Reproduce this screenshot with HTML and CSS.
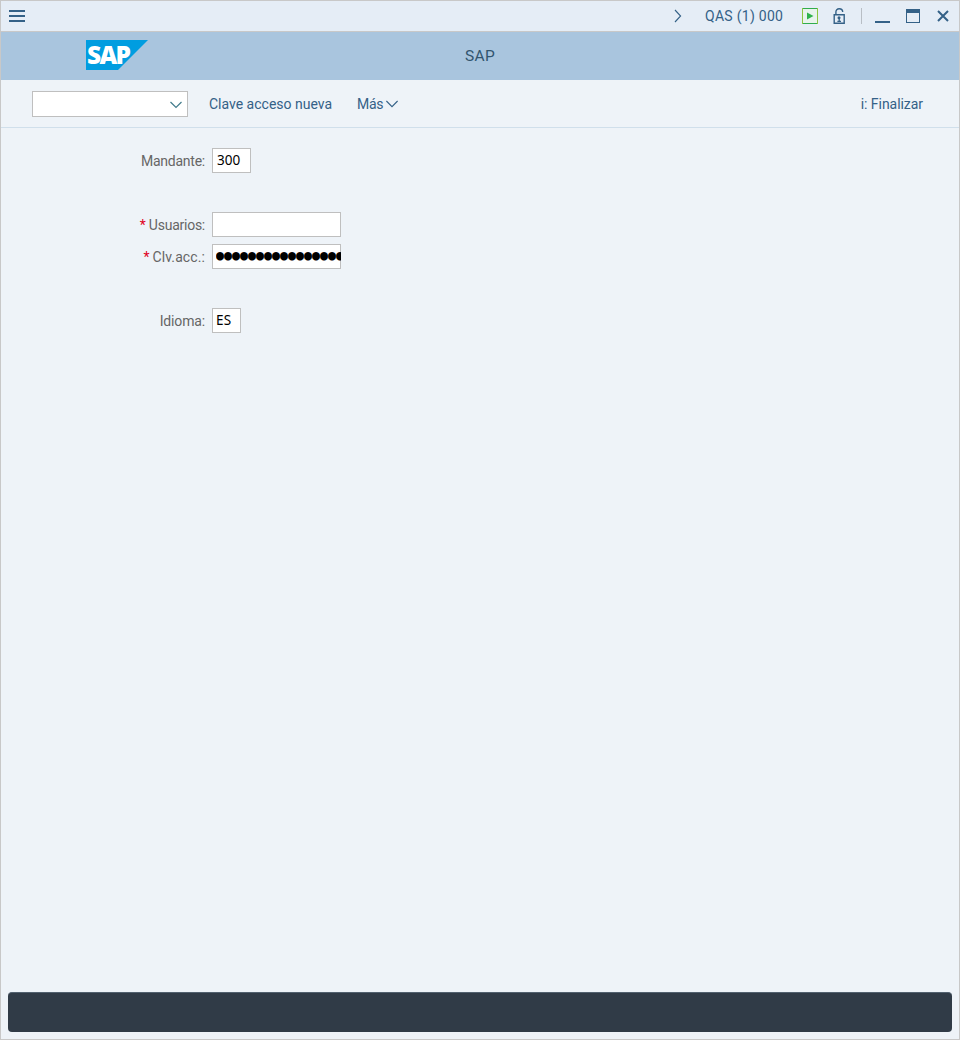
FILE: index.html
```html
<!DOCTYPE html>
<html lang="es">
<head>
<meta charset="utf-8">
<title>SAP</title>
<link rel="stylesheet" href="styles.css">
</head>
<body>
<div class="window">
  <header class="titlebar">
    <svg class="menu-icon" width="16" height="12" shape-rendering="crispEdges"><path d="M0 0h16v2H0zM0 5h16v2H0zM0 10h16v2H0z" fill="#346187"/></svg>
    <svg class="chevron-right" width="8" height="14" fill="none" stroke="#346187" stroke-width="1.1"><path d="M1 1l5.600 6L1 13"/></svg>
    <span class="system">QAS (1) 000</span>
    <svg class="play" width="16" height="16"><path d="M.5 .5h15v15H.5z" fill="#e8f3ec" stroke="#30ad4d"/><path d="M.5 0v16M15.500 0v16" stroke="#8cc63f"/><path d="M5 4.500v7l6.500-3.500z" fill="#2fb24c"/></svg>
    <svg class="lock" width="12" height="16" fill="none" stroke="#346187" stroke-width="1.400"><path d="M1.200 6.700h10v8.600h-10z"/><path d="M2.900 6.500V4C2.900 2 4.100.8 6.200.8S9.700 2 9.700 4"/><path d="M6.200 9v4.500M4.400 13.300h3.600" stroke-width="1.300"/><circle cx="6" cy="9.800" r="1.500" fill="#346187" stroke="none"/></svg>
    <i class="separator"></i>
    <svg class="minimize" width="15" height="2"><path d="M0 0h15v2H0z" fill="#346187"/></svg>
    <svg class="maximize" width="14" height="14" shape-rendering="crispEdges"><path d="M.5 .5h13v13H.5z" fill="none" stroke="#346187"/><path d="M0 0h14v4H0z" fill="#346187"/></svg>
    <svg class="close" width="12" height="12" stroke="#346187" stroke-width="2"><path d="M1 1l10 10M11 1L1 11"/></svg>
  </header>
  <div class="banner">
    <svg class="logo" width="62" height="30"><path d="M0 0h62L32 30H0z" fill="#009de0"/><text x="1" y="23.500" class="logo-text">SAP</text></svg>
    <h1 class="title">SAP</h1>
  </div>
  <nav class="toolbar">
    <div class="command"><svg width="12" height="8" fill="none" stroke="#427b8c" stroke-width="1.200"><path d="M.5 1L6 6.500 11.500 1"/></svg></div>
    <span class="new-password">Clave acceso nueva</span>
    <span class="more">Más</span>
    <svg class="more-arrow" width="12" height="8" fill="none" stroke="#346187" stroke-width="1.100"><path d="M.4 1L6 6.600 11.600 1"/></svg>
    <span class="exit">i: Finalizar</span>
  </nav>
  <main class="form">
    <div class="row"><label class="label client">Mandante:</label><div class="field field-client">300</div></div>
    <div class="row row-user"><span class="star">*</span><label class="label user">Usuarios:</label><div class="field field-wide"></div></div>
    <div class="row row-pass"><span class="star">*</span><label class="label pass">Clv.acc.:</label><div class="field field-wide field-pass"><span class="dots">●●●●●●●●●●●●●●●●</span></div></div>
    <div class="row row-language"><label class="label language">Idioma:</label><div class="field field-language">ES</div></div>
  </main>
  <footer class="statusbar"></footer>
</div>
</body>
</html>
```
FILE: styles.css
```css
* { box-sizing: border-box; }
body { margin: 0; font: 14px/20px Roboto, "Liberation Sans", sans-serif; color: #346187; }
svg { display: block; flex: none; }
.window { width: 960px; height: 1040px; border: 1px solid #c8c8c8; background: #eef3f8; display: flex; flex-direction: column; }
.titlebar { height: 31px; flex: none; background: #e5edf6; border-bottom: 1px solid #c8c8c8; display: flex; align-items: center; padding: 0 10px 0 8px; white-space: nowrap; }
.chevron-right { margin-left: auto; }
.system { width: 78px; margin-left: 23px; letter-spacing: .28px; }
.play { margin-left: 19px; }
.lock { margin-left: 15px; }
.separator { width: 1px; height: 16px; background: #b8bec5; margin-left: 16px; }
.minimize { margin: 12px 0 0 13px; }
.maximize { margin-left: 16px; }
.close { margin-left: 17px; }
.banner { height: 48px; flex: none; background: #a9c5de; display: grid; grid-template-columns: 1fr auto 1fr; align-items: center; }
.logo { margin: 0 0 2px 85px; }
.logo-text { font: 800 24.5px "Open Sans", sans-serif; fill: #fff; letter-spacing: -1.7px; }
.title { margin: 0; font-size: 15.5px; font-weight: 400; letter-spacing: .3px; color: #32556f; }
.toolbar { height: 48px; flex: none; border-bottom: 1px solid #d0dfeb; display: flex; align-items: center; padding: 0 36px 0 31px; white-space: nowrap; }
.command { width: 156px; height: 26px; background: #fff; border: 1px solid #bfbfbf; display: flex; align-items: center; justify-content: flex-end; padding: 2px 5px 0 0; }
.new-password { width: 123px; margin-left: 21px; padding-top: 1px; }
.more { width: 26px; margin-left: 25px; padding-top: 1px; letter-spacing: -.3px; }
.more-arrow { margin-left: 3px; }
.exit { margin-left: auto; padding-top: 1px; letter-spacing: -.05px; }
.form { flex: 1; padding: 20px 0 0 31px; color: #666; }
.row { display: flex; justify-content: flex-end; height: 25px; width: 219px; align-items: center; white-space: nowrap; }
.row-user, .row-pass { width: 309px; }
.row-language { width: 209px; }
.row-user, .row-language { margin-top: 39px; }
.row-pass { margin-top: 7px; }
.label { margin-right: 7px; padding-top: 1px; }
.star { color: #e00022; margin-right: 3px; }
.client { letter-spacing: -.25px; }
.user { letter-spacing: -.25px; }
.language { letter-spacing: -.15px; }
.pass { letter-spacing: .1px; }
.field { height: 25px; flex: none; background: #fff; border: 1px solid #bfbfbf; color: #000; font: 13.5px/22px "Noto Sans", sans-serif; padding-left: 4px; }
.field-client { width: 39px; }
.field-wide { width: 129px; }
.field-language { width: 29px; padding-left: 3px; letter-spacing: .3px; }
.field-pass { padding-left: 3px; }
.dots { display: block; width: 125px; overflow: hidden; font: 13.3px/22px "DejaVu Sans Mono", monospace; transform: scaleY(1.08); }
.statusbar { height: 40px; flex: none; margin: 0 7px 7px; background: #303b47; border-top: 1px solid #52616f; border-radius: 4px; }
```
